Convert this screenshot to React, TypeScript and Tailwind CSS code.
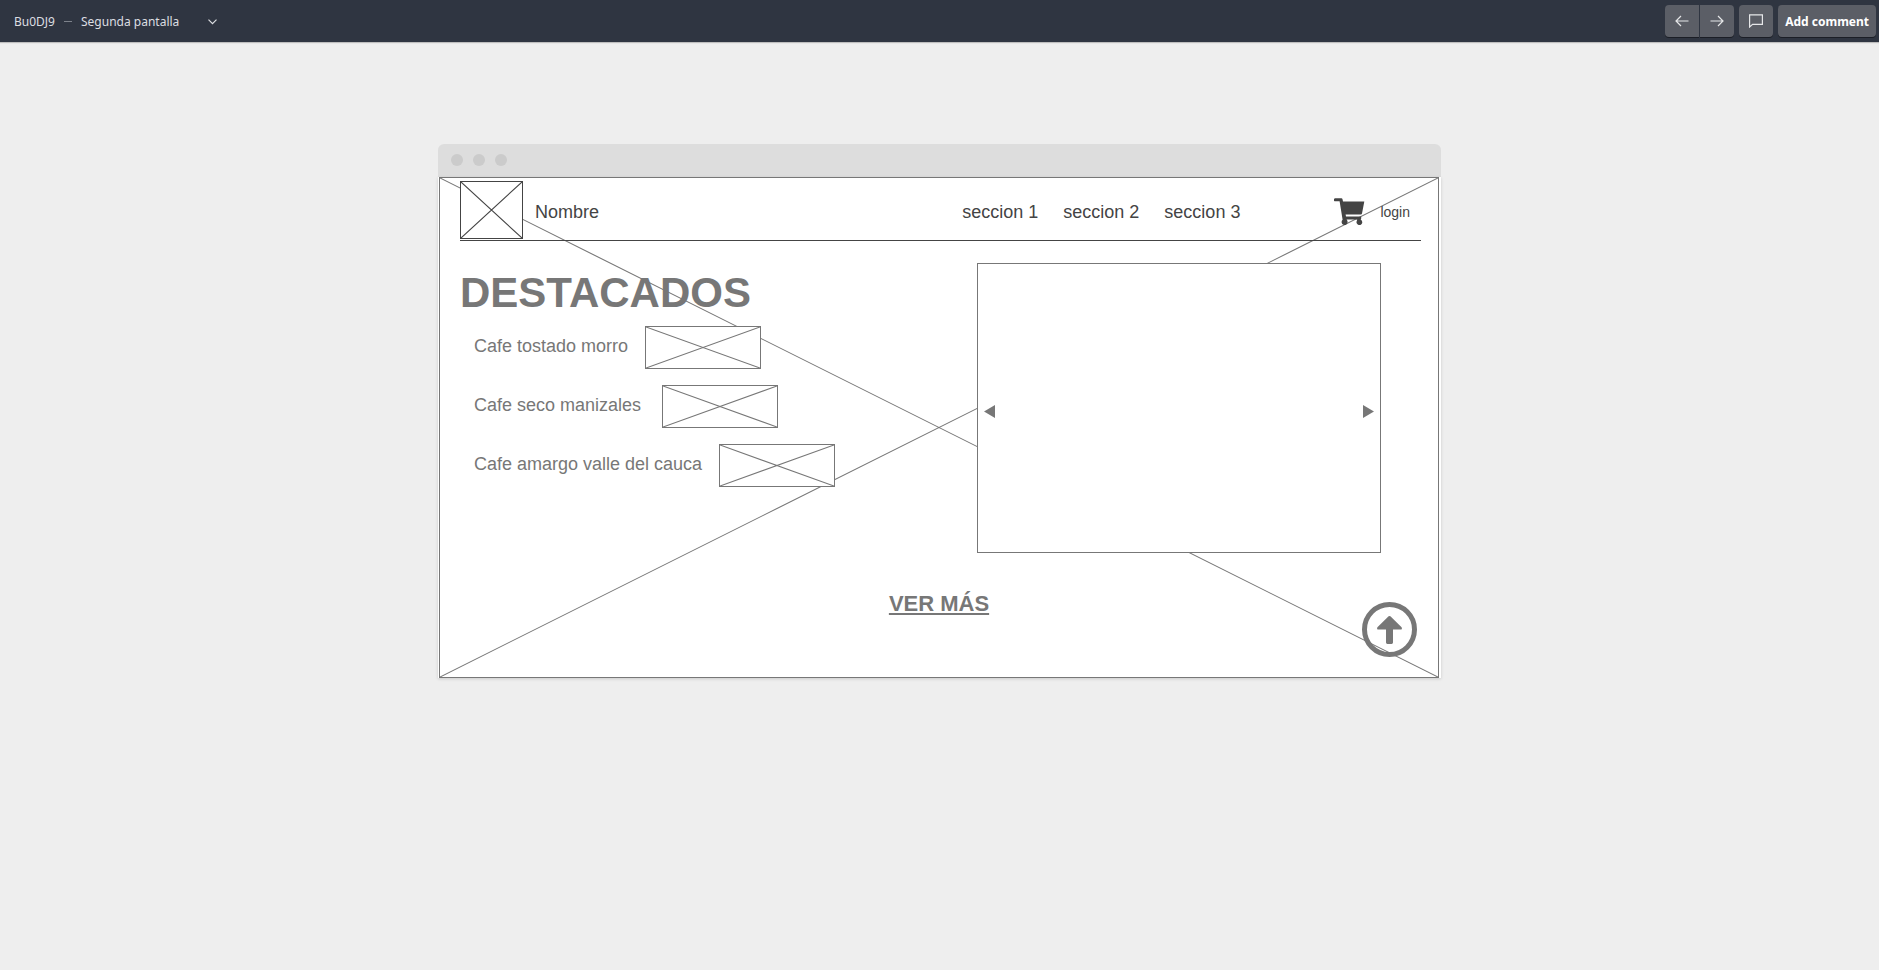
import type { ReactNode } from "react";

function Cross({ className }: { className: string }) {
  return (
    <svg
      className={className}
      viewBox="0 0 100 100"
      preserveAspectRatio="none"
      fill="none"
      stroke="currentColor"
      aria-hidden="true"
    >
      <path d="M0 0L100 100M100 0L0 100" strokeWidth="1.1" vectorEffect="non-scaling-stroke" />
    </svg>
  );
}

function Toolbar() {
  const button =
    "flex h-8 items-center justify-center bg-[#5b5e66] text-[#e6e7e9] shadow-[0_1px_0_#1b1e26]";
  return (
    <header className="flex h-[42px] items-center justify-between bg-[#2f3541] pr-[3px] pl-[14px] font-['Noto_Sans',sans-serif] text-xs text-[#dcdee1] shadow-[0_1px_1px_rgba(0,0,0,0.2)]">
      <div className="flex items-center pt-px">
        <span>Bu0DJ9</span>
        <span className="mx-[9px] h-px w-2 bg-[#7d828b]" />
        <button type="button" className="flex items-center gap-[29px]">
          Segunda pantalla
          <svg width="9" height="6" viewBox="0 0 9 6" fill="none" stroke="currentColor" aria-hidden="true">
            <path d="M0.5 0.7L4.5 4.7L8.5 0.7" strokeWidth="1.2" />
          </svg>
        </button>
      </div>
      <div className="flex items-center gap-[5px]">
        <div className="flex gap-px">
          <button type="button" aria-label="Previous" className={`${button} w-[34px] rounded-l-[4px]`}>
            <svg width="14" height="12" viewBox="0 0 14 12" fill="none" stroke="currentColor" strokeWidth="1.2">
              <path d="M13.5 6H1M6 1L1 6L6 11" />
            </svg>
          </button>
          <button type="button" aria-label="Next" className={`${button} w-[34px] rounded-r-[4px]`}>
            <svg width="14" height="12" viewBox="0 0 14 12" fill="none" stroke="currentColor" strokeWidth="1.2">
              <path d="M0.5 6H13M8 1L13 6L8 11" />
            </svg>
          </button>
        </div>
        <button type="button" aria-label="Comments" className={`${button} w-[34px] rounded-[4px]`}>
          <svg width="14" height="14" viewBox="0 0 14 14" fill="none" stroke="currentColor" strokeWidth="1.2">
            <path d="M0.6 0.9H13.4V10.4H3.6L0.6 13Z" />
          </svg>
        </button>
        <button type="button" className={`${button} rounded-[4px] px-[7px] pt-px font-bold text-white`}>
          Add comment
        </button>
      </div>
    </header>
  );
}

function Product({ name, gap }: { name: ReactNode; gap: string }) {
  return (
    <li className={`flex ${gap}`}>
      <span className="text-lg/10">{name}</span>
      <span className="h-[43px] w-[116px] border border-current bg-white">
        <Cross className="size-full" />
      </span>
    </li>
  );
}

export default function App() {
  return (
    <div className="min-h-screen bg-[#eee] font-['Liberation_Sans',Arial,sans-serif]">
      <Toolbar />
      <main className="mx-auto mt-[102px] w-full max-w-[1003px]">
        <div className="flex h-[33px] items-center gap-[10px] rounded-t-[6px] bg-[#ddd] pb-px pl-[13px]">
          <span className="size-3 rounded-full bg-[#cbcbcb]" />
          <span className="size-3 rounded-full bg-[#cbcbcb]" />
          <span className="size-3 rounded-full bg-[#cbcbcb]" />
        </div>
        <div className="bg-white pr-[2px] pl-px shadow-[0_1px_3px_rgba(0,0,0,0.15)]">
          <div className="relative border border-[#777] pb-[59px] text-[#777]">
            <Cross className="absolute inset-0 size-full" />

            <div className="relative mr-[17px] ml-5 flex items-center border-b border-[#444] pt-[3px] pb-px text-lg text-[#444]">
              <span className="h-[58px] w-[63px] border border-[#444] bg-white">
                <Cross className="size-full" />
              </span>
              <div className="ml-3 flex flex-1 items-center pt-1 pr-[11px]">
                <span>Nombre</span>
                <nav className="mr-[94px] ml-auto flex gap-[25px]">
                  <a href="#seccion-1">seccion 1</a>
                  <a href="#seccion-2">seccion 2</a>
                  <a href="#seccion-3">seccion 3</a>
                </nav>
                <svg width="31" height="28" viewBox="0 0 31 28" fill="currentColor" aria-hidden="true">
                  <path d="M1.3 0.3H7.4Q8.3 0.3 8.5 1.2L9 3.6H30.3L28 15.4Q27.8 16.4 26.8 16.4H11.6L12 18.6H27.2V20.6L26.7 21.4Q28.3 22.3 28.3 24.2A2.9 2.9 0 1 1 22.9 22.7L23.2 21.4H12.6Q13.6 22.5 13.6 24A3 3 0 1 1 8.6 21.8L5.6 3.3H1.3A1.5 1.5 0 0 1 1.3 0.3Z" />
                </svg>
                <a href="#login" className="ml-[15px] text-sm">
                  login
                </a>
              </div>
            </div>

            <div className="relative mr-[57px] ml-5 flex items-start justify-between pt-[22px]">
              <section className="pt-[6px]">
                <h1 className="text-[42px]/[48px] font-bold">DESTACADOS</h1>
                <ul className="mt-[9px] ml-[14px] flex flex-col gap-4">
                  <Product name="Cafe tostado morro" gap="gap-[17px]" />
                  <Product name="Cafe seco manizales" gap="gap-[21px]" />
                  <Product name="Cafe amargo valle del cauca" gap="gap-[17px]" />
                </ul>
              </section>
              <div className="flex h-[290px] w-[404px] items-center justify-between border border-[#777] bg-white px-[6px] pt-[7px]">
                <button type="button" aria-label="Anterior">
                  <svg width="11" height="13" viewBox="0 0 11 13" fill="currentColor">
                    <path d="M11 0V13L0 6.5Z" />
                  </svg>
                </button>
                <button type="button" aria-label="Siguiente">
                  <svg width="11" height="13" viewBox="0 0 11 13" fill="currentColor">
                    <path d="M0 0V13L11 6.5Z" />
                  </svg>
                </button>
              </div>
            </div>

            <div className="relative mt-[37px] text-center text-[22px]/7 font-bold">
              <a href="#mas" className="underline">
                VER MÁS
              </a>
            </div>

            <button type="button" aria-label="Subir" className="absolute right-[21px] bottom-5">
              <svg width="55" height="55" viewBox="0 0 55 55" fill="none">
                <circle cx="27.5" cy="27.5" r="25" stroke="currentColor" strokeWidth="5" />
                <path
                  d="M26.6 14.3Q27.5 13.5 28.4 14.3L39.6 25.2Q40.6 27.3 38.6 27.6H31V40.6Q31 42 29.6 42H25.4Q24 42 24 40.6V27.6H16.4Q14.4 27.3 15.4 25.2Z"
                  fill="currentColor"
                />
              </svg>
            </button>
          </div>
        </div>
      </main>
    </div>
  );
}
